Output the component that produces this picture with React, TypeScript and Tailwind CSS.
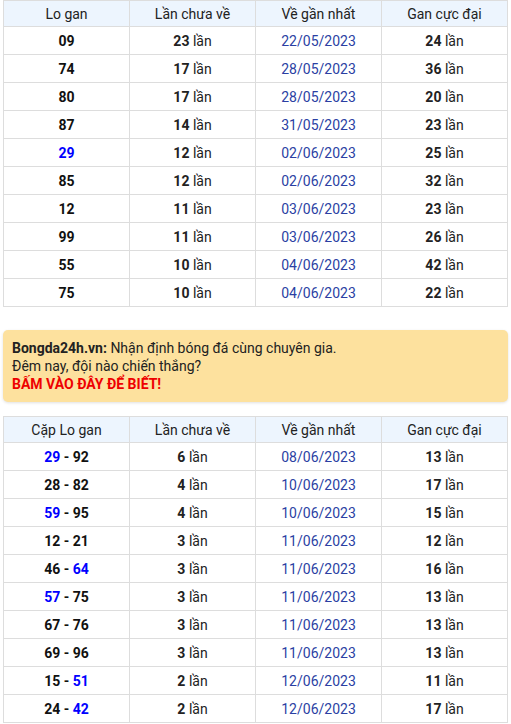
const loGan = [
  { so: '09', chua: 23, ngay: '22/05/2023', max: 24 },
  { so: '74', chua: 17, ngay: '28/05/2023', max: 36 },
  { so: '80', chua: 17, ngay: '28/05/2023', max: 20 },
  { so: '87', chua: 14, ngay: '31/05/2023', max: 23 },
  { so: '29', chua: 12, ngay: '02/06/2023', max: 25, blue: true },
  { so: '85', chua: 12, ngay: '02/06/2023', max: 32 },
  { so: '12', chua: 11, ngay: '03/06/2023', max: 23 },
  { so: '99', chua: 11, ngay: '03/06/2023', max: 26 },
  { so: '55', chua: 10, ngay: '04/06/2023', max: 42 },
  { so: '75', chua: 10, ngay: '04/06/2023', max: 22 },
]

// ab / bb: which number of the pair is shown in blue
const capGan: { a: string; ab?: boolean; b: string; bb?: boolean; chua: number; ngay: string; max: number }[] = [
  { a: '29', ab: true, b: '92', chua: 6, ngay: '08/06/2023', max: 13 },
  { a: '28', b: '82', chua: 4, ngay: '10/06/2023', max: 17 },
  { a: '59', ab: true, b: '95', chua: 4, ngay: '10/06/2023', max: 15 },
  { a: '12', b: '21', chua: 3, ngay: '11/06/2023', max: 12 },
  { a: '46', b: '64', bb: true, chua: 3, ngay: '11/06/2023', max: 16 },
  { a: '57', ab: true, b: '75', chua: 3, ngay: '11/06/2023', max: 13 },
  { a: '67', b: '76', chua: 3, ngay: '11/06/2023', max: 13 },
  { a: '69', b: '96', chua: 3, ngay: '11/06/2023', max: 13 },
  { a: '15', b: '51', bb: true, chua: 2, ngay: '12/06/2023', max: 11 },
  { a: '24', b: '42', bb: true, chua: 2, ngay: '12/06/2023', max: 17 },
]

const th = 'h-[26px] border border-[#dddddd] bg-[#edf5fe] font-normal text-center p-0'
const td = 'h-[28px] border border-[#dddddd] text-center p-0'

function Header({ first }: { first: string }) {
  return (
    <thead>
      <tr>
        <th className={th}>{first}</th>
        <th className={th}>Lần chưa về</th>
        <th className={th}>Về gần nhất</th>
        <th className={th}>Gan cực đại</th>
      </tr>
    </thead>
  )
}

function Lan({ n }: { n: number }) {
  return (
    <>
      <b className="font-bold">{n}</b> lần
    </>
  )
}

export default function App() {
  return (
    <div
      className="bg-white px-[3px] text-[14px] leading-[18px] text-[#222222]"
      style={{ fontFamily: 'Roboto, "Liberation Sans", sans-serif' }}
    >
      <table className="w-full table-fixed border-collapse">
        <Header first="Lo gan" />
        <tbody>
          {loGan.map((r) => (
            <tr key={r.so}>
              <td className={`${td} font-bold ${r.blue ? 'text-[#0000ff]' : 'text-[#111111]'}`}>{r.so}</td>
              <td className={td}><Lan n={r.chua} /></td>
              <td className={`${td} text-[#2b3fa3]`}>{r.ngay}</td>
              <td className={td}><Lan n={r.max} /></td>
            </tr>
          ))}
        </tbody>
      </table>

      <div className="mt-[23px] mb-[14px] h-[72px] rounded-[5px] bg-[#fde19e] px-[9px] py-[9px] shadow-[0_1px_3px_rgba(0,0,0,0.12)]">
        <div>
          <b className="font-bold">Bongda24h.vn:</b> Nhận định bóng đá cùng chuyên gia.
        </div>
        <div>Đêm nay, đội nào chiến thắng?</div>
        <div className="font-bold text-[#ee0000]">BẤM VÀO ĐÂY ĐỂ BIẾT!</div>
      </div>

      <table className="w-full table-fixed border-collapse">
        <Header first="Cặp Lo gan" />
        <tbody>
          {capGan.map((r) => (
            <tr key={r.a + r.b}>
              <td className={`${td} font-bold text-[#111111]`}>
                <span className={r.ab ? 'text-[#0000ff]' : ''}>{r.a}</span>
                {' - '}
                <span className={r.bb ? 'text-[#0000ff]' : ''}>{r.b}</span>
              </td>
              <td className={td}><Lan n={r.chua} /></td>
              <td className={`${td} text-[#2b3fa3]`}>{r.ngay}</td>
              <td className={td}><Lan n={r.max} /></td>
            </tr>
          ))}
        </tbody>
      </table>
    </div>
  )
}
